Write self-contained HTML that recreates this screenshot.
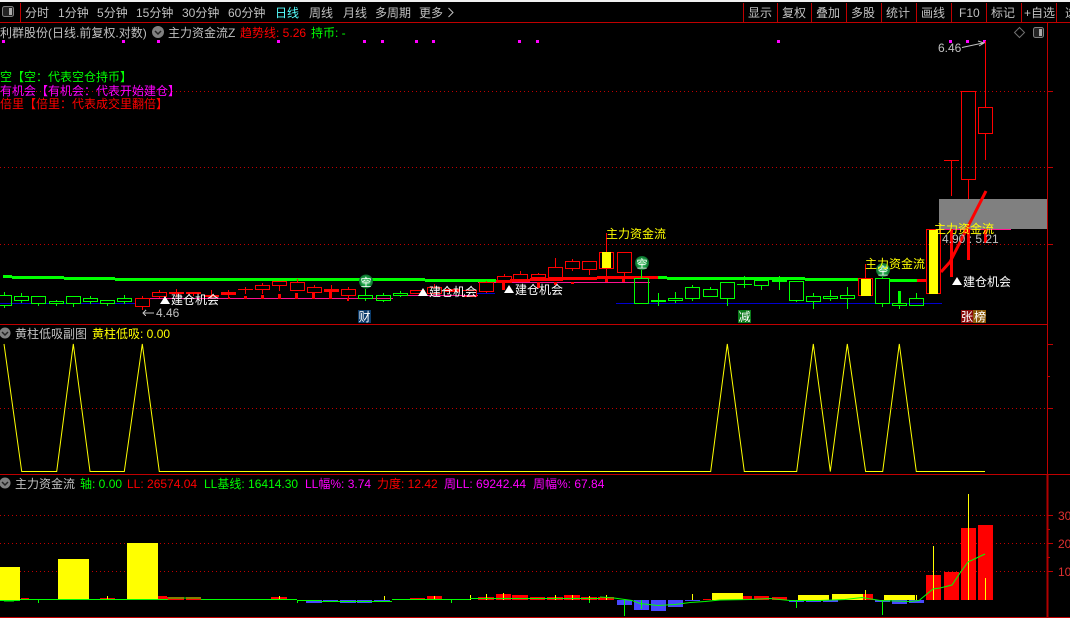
<!DOCTYPE html>
<html><head><meta charset="utf-8"><style>
html,body{margin:0;padding:0;background:#000;width:1070px;height:618px;overflow:hidden}
svg{display:block;position:absolute;left:0;top:0}
text{font-size:12px;white-space:pre;font-family:"WenQuanYi Zen Hei","Noto Sans CJK SC",sans-serif}
.l{font-family:"Liberation Sans",sans-serif}
.g{fill:#c0c0c0}.r{fill:#f00}.n{fill:#0f0}.m{fill:#f0f}.y{fill:#ff0}.w{fill:#fff}
</style></head><body>
<svg width="1070" height="618" viewBox="0 0 1070 618">
<rect width="1070" height="618" fill="#000"/>
<rect width="1070" height="2" fill="#f0f0f0"/>

<!-- frame lines -->
<g shape-rendering="crispEdges">
<path d="M0 22.5H1070M0 324.5H1047M0 474.5H1047M0 617.5H1070" stroke="#c00000" fill="none"/>
<path d="M20.5 3V22M743.5 3V22M777.5 3V22M811.5 3V22M846.5 3V22M881.5 3V22M916.5 3V22M951.5 3V22M986.5 3V22M1021.5 3V22M1056.5 3V22" stroke="#c00000" fill="none"/>
<path d="M1047.5 22V474" stroke="#c00000" fill="none"/>
<path d="M1047.5 474V618" stroke="#b00000" stroke-width="2" fill="none"/>
<path d="M1047 91.5H1053M1047 167.5H1053M1047 244.5H1053M1047 344.5H1053M1047 376.5H1050M1047 408.5H1053M1047 474.5H1070M1047 515.5H1053M1047 529.5H1050M1047 543.5H1053M1047 557.5H1050M1047 571.5H1053" stroke="#c00000" fill="none"/>
<path d="M0 91.5H1047M0 167.5H1047M0 244.5H1047M0 408.5H1047M0 515.5H1047M0 543.5H1047M0 571.5H1047" stroke="#c00000" stroke-dasharray="1 3" fill="none"/>

<!-- magenta dots -->
<path d="M2 40h3v3h-3zM122 40h3v3h-3zM157 40h3v3h-3zM277 40h3v3h-3zM363 40h3v3h-3zM381 40h3v3h-3zM415 40h3v3h-3zM432 40h3v3h-3zM518 40h3v3h-3zM536 40h3v3h-3zM777 40h3v3h-3zM949 40h3v3h-3zM966 40h3v3h-3zM983 40h3v3h-3z" fill="#f0f"/>

<!-- ma lines under candles -->
<path d="M0 303.5H135M477 293.5H495M616 303.5H942" stroke="#0000d0" fill="none"/>
<path d="M150 298.5H393M393 295.5H478M478 282.5H650" stroke="#ff1090" fill="none"/>
<path d="M939 229.5H1011" stroke="#ff1090" fill="none"/>
<path d="M228 297h2v2h-2zM244 296h3v3h-3zM261 295h3v4h-3zM278 294h3v5h-3zM295 293h3v6h-3zM312 293h3v6h-3zM329 292h3v7h-3zM347 298h2v3h-2zM502 282h3v8h-3zM537 282h3v6h-3zM554 282h3v3h-3zM571 282h3v2h-3zM605 277h3v5h-3zM622 277h3v5h-3z" fill="#f00"/>

<!-- long trend line -->
<path d="M3 276.5H12M12 277.5H64M64 278.5H115M115 279.5H425M425 280.5H496M658 277.5H667M667 278.5H805M805 279.5H858M890 280.5H917" stroke="#0f0" stroke-width="3" fill="none"/>
<path d="M496 281.5H510M510 280.5H530M530 279.5H563M563 278.5H597M597 277.5H658M917 280.5H926" stroke="#f00" stroke-width="3" fill="none"/>

<!-- green candles -->
<path fill="none" stroke="#0f0" d="M-2.5 295.5H11.5V305.5H-2.5ZM4.5 292V295M4.5 306V308
M14.5 296.5H28.5V300.5H14.5ZM21.5 293V296M21.5 301V303
M31.5 296.5H45.5V303.5H31.5ZM38.5 304V306
M49.5 301.5H63.5V303.5H49.5ZM56.5 300V301M56.5 304V306
M66.5 296.5H80.5V303.5H66.5ZM73.5 304V307
M83.5 298.5H97.5V301.5H83.5ZM90.5 296V298M90.5 302V304
M100.5 300.5H114.5V303.5H100.5ZM107.5 304V306
M117.5 298.5H131.5V301.5H117.5ZM124.5 295V298M124.5 302V304
M358.5 295.5H372.5V298.5H358.5ZM365.5 289V295M365.5 299V301
M376.5 295.5H390.5V300.5H376.5ZM383.5 293V295M383.5 301V302
M393.5 293.5H407.5V295.5H393.5ZM400.5 291V293M400.5 296V297
M634.5 278.5H648.5V303.5H634.5ZM641.5 269V278
M658.5 293V306
M668.5 298.5H682.5V300.5H668.5ZM675.5 292V298M675.5 301V303
M685.5 287.5H699.5V298.5H685.5ZM692.5 285V287M692.5 299V301
M703.5 289.5H717.5V296.5H703.5ZM710.5 287V289
M720.5 282.5H734.5V298.5H720.5ZM727.5 299V306
M744.5 276V288M737 284.5H752
M754.5 280.5H768.5V285.5H754.5ZM761.5 286V290
M779.5 276V290
M789.5 281.5H803.5V300.5H789.5ZM796.5 301V302
M806.5 296.5H820.5V301.5H806.5ZM813.5 293V296M813.5 302V309
M823.5 296.5H837.5V298.5H823.5ZM830.5 290V296M830.5 299V301
M840.5 295.5H854.5V298.5H840.5ZM847.5 287V295M847.5 299V309
M875.5 278.5H889.5V303.5H875.5ZM882.5 304V307M882.5 273V278
M892.5 303.5H906.5V305.5H892.5ZM899.5 306V309
M909.5 298.5H923.5V305.5H909.5ZM916.5 293V298"/>
<path d="M651 300h15v2h-15zM772 280h15v2h-15zM898 291h3v12h-3z" fill="#0f0"/>

<!-- red candles -->
<path fill="none" stroke="#f00" d="M135.5 298.5H149.5V306.5H135.5ZM142.5 296V298M142.5 307V310
M152.5 292.5H166.5V296.5H152.5ZM159.5 290V292M159.5 297V298
M176.5 289V297M193.5 292V296M211.5 290V298M228.5 290V298
M238 289.5H253M245.5 287V294
M255.5 285.5H269.5V289.5H255.5ZM262.5 283V285M262.5 290V294
M272.5 281.5H286.5V285.5H272.5ZM279.5 286V291
M290.5 282.5H304.5V290.5H290.5ZM297.5 279V282
M307.5 287.5H321.5V292.5H307.5ZM314.5 285V287M314.5 293V295
M331.5 285V293
M341.5 289.5H355.5V295.5H341.5ZM348.5 287V289M348.5 296V300
M410.5 290.5H424.5V293.5H410.5Z
M427.5 287.5H441.5V293.5H427.5ZM434.5 284V287
M462.5 290.5H476.5V296.5H462.5Z
M479.5 282.5H493.5V291.5H479.5ZM486.5 281V282M486.5 292V293
M497.5 276.5H511.5V282.5H497.5ZM504.5 274V276
M513.5 274.5H527.5V279.5H513.5ZM520.5 271V274
M531.5 274.5H545.5V277.5H531.5ZM538.5 273V274
M548.5 267.5H562.5V277.5H548.5ZM555.5 258V267
M565.5 261.5H579.5V268.5H565.5ZM572.5 259V261M572.5 269V271
M582.5 261.5H596.5V269.5H582.5ZM589.5 270V275
M599.5 252.5H613.5V268.5H599.5ZM606.5 233V252M606.5 269V277
M617.5 252.5H631.5V272.5H617.5ZM624.5 273V278
M858.5 278.5H872.5V295.5H858.5ZM865.5 264V278
M926.5 229.5H940.5V293.5H926.5Z
M951.5 160V196
M961.5 91.5H975.5V179.5H961.5ZM968.5 180V199
M978.5 107.5H992.5V133.5H978.5ZM985.5 41V107M985.5 134V160
M944 160.5H959"/>
<path d="M169 292h15v2h-15zM186 292h15v2h-15zM204 295h15v2h-15zM221 292h15v3h-15zM324 289h15v3h-15zM445 289h15v3h-15z" fill="#f00"/>
<path d="M602 252h9v16h-9zM861 279h10v17h-10zM929 230h9v64h-9z" fill="#ff0"/>

<!-- gray block -->
<rect x="939" y="199" width="108" height="30" fill="#808080"/>
<path d="M950 229h3v48h-3zM967 229h3v31h-3zM984 229h3v14h-3z" fill="#f00"/>
</g>
<path d="M941 272L950 262L986 191" stroke="#f00" stroke-width="3" fill="none"/>
<path d="M962 47.500L983 43M978 41L984 43L979 46" stroke="#c0c0c0" fill="none"/>
<path d="M154 313H143M146 310L143 313L146 316" stroke="#c0c0c0" fill="none" shape-rendering="crispEdges"/>

<!-- sub 1 line -->
<path d="M4 344L21.700 471.500H56.700L73.300 344L90 471.500H124.300L142.300 344L159.300 471.500H710.700L727.300 344L744.300 471.500H796.700L813.300 344L830.300 471.500L847.300 344L865.600 471.500H882.700L899.300 344L916.300 471.500H985" stroke="#ff0" fill="none"/>

<!-- sub 2 bars -->
<g shape-rendering="crispEdges">
<path fill="#f00" d="M21 598h8v2h-8zM100 598h15v2h-15zM158 596h9v4h-9zM167 597h17v3h-17zM186 597h15v3h-15zM271 597h16v3h-16zM410 598h15v2h-15zM427 596h15v4h-15zM478 597h16v3h-16zM496 594h15v6h-15zM512 595h16v5h-16zM530 597h15v3h-15zM547 597h16v3h-16zM564 595h16v5h-16zM581 597h16v3h-16zM598 597h16v3h-16zM703 599h8v1h-8zM743 596h9v4h-9zM754 596h15v4h-15zM772 597h15v3h-15zM863 594h10v6h-10zM926 575h15v25h-15zM944 572h15v28h-15zM961 528h15v72h-15zM978 525h15v75h-15z"/>
<path fill="#4848ff" d="M617 600h15v5h-15zM634 600h15v10h-15zM651 600h15v11h-15zM668 600h15v7h-15zM685 600h15v1h-15zM306 600h16v3h-16zM323 600h15v2h-15zM340 600h16v3h-16zM357 600h15v3h-15zM374 600h16v2h-16zM789 600h15v2h-15zM806 600h15v2h-15zM823 600h15v2h-15zM875 600h15v2h-15zM892 600h15v4h-15zM909 600h15v3h-15z"/>
<path fill="#ff0" d="M0 567h20v33h-20zM58 559h31v41h-31zM127 543h31v57h-31zM712 593h31v7h-31zM798 595h31v5h-31zM832 594h31v6h-31zM884 595h31v5h-31zM933 546h1v54h-1zM968 494h1v106h-1zM985 578h1v22h-1zM692 594h1v6h-1zM865 590h1v10h-1zM606 595h1v5h-1zM916 595h1v5h-1zM107 596h1v4h-1zM279 596h1v4h-1zM384 596h1v4h-1zM434 596h1v4h-1zM470 595h1v5h-1zM486 594h1v6h-1zM503 593h1v7h-1zM555 595h1v5h-1zM572 595h1v5h-1zM589 596h1v4h-1z"/>
<path fill="#0f0" d="M624 600h1v16h-1zM641 600h1v9h-1zM796 600h1v8h-1zM882 600h1v15h-1zM297 600h1v3h-1zM451 600h1v3h-1zM38 600h1v3h-1zM589 600h1v3h-1z"/>
</g>
<path d="M0 600.500H20M4 601H14M20 599.500H168M168 598H201M201 599.500H297M297 600.500H320M320 601.500H392M392 599.500H470M470 598.500H600M600 597L614 598L632 600.500L640 603.500L658 605.500L675 604.500L690 602.500L705 601.500L720 600L750 599.500L770 598.500L790 600.500L820 600.500L845 599.500L862 597.500L880 600.500L910 601.500L919 600.500L933 589L940 588L952 585L960 573L968 562L985 554" stroke="#0f0" fill="none"/>

<!-- circle markers -->
<defs><radialGradient id="gc"><stop offset="0" stop-color="#8fd8a0"/><stop offset=".55" stop-color="#1fa84a"/><stop offset="1" stop-color="#0a6a2a"/></radialGradient></defs>
<circle cx="366" cy="281.500" r="7" fill="url(#gc)"/><circle cx="642" cy="263" r="7" fill="url(#gc)"/><circle cx="883" cy="270" r="7" fill="url(#gc)"/>
<text x="360.500" y="286" style="font-size:11px" class="w">空</text><text x="636.500" y="267.500" style="font-size:11px" class="w">空</text><text x="877.500" y="274.500" style="font-size:11px" class="w">空</text>

<!-- tag backgrounds -->
<rect x="358" y="310" width="13" height="13" fill="#0a3a6a"/>
<rect x="738" y="310" width="13" height="13" fill="#0a7a1a"/>
<rect x="961" y="310" width="12" height="13" fill="#8b0a0a"/>
<rect x="973" y="310" width="13" height="13" fill="#8a5a0a"/>
<text x="358.500" y="321" class="w">财</text><text x="738.500" y="321" class="w">减</text><text x="961" y="321" class="w">张</text><text x="974" y="321" class="w">榜</text>

<!-- toolbar -->
<rect x="2.500" y="6.500" width="11" height="10" rx="2" fill="#222" stroke="#808080"/><rect x="9" y="8" width="3" height="7" fill="#aaa"/>
<text x="25" y="17" class="g">分时</text>
<text x="58" y="17" class="g"><tspan class="l">1</tspan>分钟</text>
<text x="97" y="17" class="g"><tspan class="l">5</tspan>分钟</text>
<text x="136" y="17" class="g"><tspan class="l">15</tspan>分钟</text>
<text x="182" y="17" class="g"><tspan class="l">30</tspan>分钟</text>
<text x="228" y="17" class="g"><tspan class="l">60</tspan>分钟</text>
<text x="275" y="17" style="fill:#5ff">日线</text>
<text x="309" y="17" class="g">周线</text>
<text x="343" y="17" class="g">月线</text>
<text x="375" y="17" class="g">多周期</text>
<text x="419" y="17" class="g">更多</text>
<path d="M448.500 8L453 12.500L448.500 17" stroke="#c0c0c0" fill="none"/>
<text x="748" y="17" class="g">显示</text><text x="782" y="17" class="g">复权</text><text x="816" y="17" class="g">叠加</text><text x="851" y="17" class="g">多股</text><text x="886" y="17" class="g">统计</text><text x="921" y="17" class="g">画线</text>
<text x="959" y="17" class="g l">F10</text>
<text x="991" y="17" class="g">标记</text>
<text x="1024" y="17" class="g"><tspan class="l">+</tspan>自选</text>
<text x="1065" y="17" class="g">选</text>

<!-- main header -->
<text x="0" y="37" class="g">利群股份<tspan class="l">(</tspan>日线<tspan class="l">.</tspan>前复权<tspan class="l">.</tspan>对数<tspan class="l">)</tspan></text>
<circle cx="158" cy="32" r="6" fill="#808080"/><path d="M155 31L158 34L161 31" stroke="#222" stroke-width="1.500" fill="none"/>
<text x="168" y="37" class="g">主力资金流<tspan class="l">Z</tspan></text>
<text x="240" y="37" class="r">趋势线<tspan class="l">: 5.26</tspan></text>
<text x="311" y="37" class="n">持币<tspan class="l">: -</tspan></text>
<path d="M1019.500 27.500L1024.500 32.500L1019.500 37.500L1014.500 32.500Z" fill="none" stroke="#707070"/>
<rect x="1033.500" y="27.500" width="10" height="10" rx="2" fill="#222" stroke="#808080"/><rect x="1039" y="29" width="3" height="7" fill="#aaa"/>

<!-- legend -->
<text x="0" y="81" class="n">空【空：代表空仓持币】</text>
<text x="0" y="95" class="m">有机会【有机会：代表开始建仓】</text>
<text x="0" y="108" class="r">倍里【倍里：代表成交里翻倍】</text>

<!-- price labels -->
<text x="938" y="52" class="g l">6.46</text>
<text x="156" y="317" class="g l">4.46</text>
<text x="942" y="243" class="g l">4.90 : 5.21</text>

<!-- yellow and white tags -->
<text x="606" y="238" class="y">主力资金流</text>
<text x="865" y="268" class="y">主力资金流</text>
<text x="934" y="233" class="y">主力资金流</text>
<path d="M165 296L170 304H160ZM423 288L428 296H418ZM509 285L514 293H504ZM957 277L962 285H952Z" fill="#fff"/>
<text x="171" y="304" class="w">建仓机会</text>
<text x="429" y="296" class="w">建仓机会</text>
<text x="515" y="294" class="w">建仓机会</text>
<text x="963" y="286" class="w">建仓机会</text>

<!-- sub 1 header -->
<circle cx="5" cy="333" r="5.500" fill="#808080"/><path d="M2 332L5 335L8 332" stroke="#222" stroke-width="1.500" fill="none"/>
<text x="15" y="338" class="g">黄柱低吸副图</text>
<text x="92" y="338" class="y">黄柱低吸<tspan class="l">: 0.00</tspan></text>

<!-- sub 2 header -->
<circle cx="5" cy="483" r="5.500" fill="#808080"/><path d="M2 482L5 485L8 482" stroke="#222" stroke-width="1.500" fill="none"/>
<text x="15" y="488" class="g">主力资金流</text>
<text x="80" y="488" class="n">轴<tspan class="l">: 0.00</tspan></text>
<text x="127" y="488" class="r l">LL: 26574.04</text>
<text x="204" y="488" class="n"><tspan class="l">LL</tspan>基线<tspan class="l">: 16414.30</tspan></text>
<text x="305" y="488" class="m"><tspan class="l">LL</tspan>幅<tspan class="l">%: 3.74</tspan></text>
<text x="377" y="488" class="r">力度<tspan class="l">: 12.42</tspan></text>
<text x="444" y="488" class="m">周<tspan class="l">LL: 69242.44</tspan></text>
<text x="533" y="488" class="m">周幅<tspan class="l">%: 67.84</tspan></text>

<!-- sub 2 axis -->
<text x="1058" y="520" class="l" style="fill:#e03030">30</text>
<text x="1058" y="548" class="l" style="fill:#e03030">20</text>
<text x="1058" y="576" class="l" style="fill:#e03030">10</text>
</svg>
</body></html>
